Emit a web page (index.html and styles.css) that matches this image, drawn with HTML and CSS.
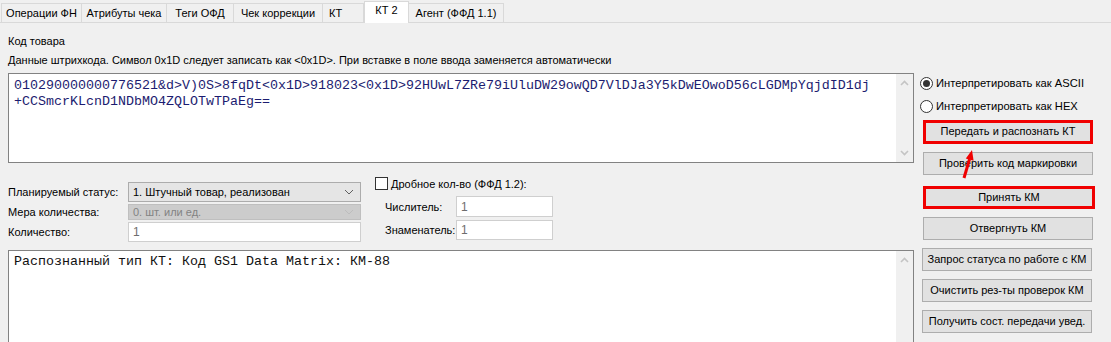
FILE: index.html
```html
<!DOCTYPE html>
<html lang="ru">
<head>
    <meta charset="UTF-8">
    <title>КТ 2</title>
    <link rel="stylesheet" href="styles.css">
</head>
<body>
    <div class="tabs">
        <div class="tab">Операции ФН</div>
        <div class="tab">Атрибуты чека</div>
        <div class="tab">Теги ОФД</div>
        <div class="tab">Чек коррекции</div>
        <div class="tab tab-kt">КТ</div>
        <div class="tab active">КТ 2</div>
        <div class="tab">Агент (ФФД 1.1)</div>
    </div>

    <div class="page">
        <div class="left">
            <div class="caption">Код товара</div>
            <div class="caption caption-2">Данные штрихкода. Символ 0x1D следует записать как &lt;0x1D&gt;. При вставке в поле ввода заменяется автоматически</div>

            <div class="memo memo-code">
                <div class="memo-text">010290000000776521&amp;d&gt;V)0S&gt;8fqDt&lt;0x1D&gt;918023&lt;0x1D&gt;92HUwL7ZRe79iUluDW29owQD7VlDJa3Y5kDwEOwoD56cLGDMpYqjdID1dj
+CCSmcrKLcnD1NDbMO4ZQLOTwTPaEg==</div>
                <div class="vscroll">
                    <svg width="9" height="6" viewBox="0 0 9 6"><polyline points="1,5 4.5,1.5 8,5" fill="none" stroke="#c4c4c4" stroke-width="1.6"/></svg>
                    <svg width="9" height="6" viewBox="0 0 9 6"><polyline points="1,1 4.5,4.5 8,1" fill="none" stroke="#c4c4c4" stroke-width="1.6"/></svg>
                </div>
            </div>

            <div class="mid">
                <div class="fields">
                    <div class="field-label">Планируемый статус:</div>
                    <div class="combo">
                        <span>1. Штучный товар, реализован</span>
                        <svg width="10" height="6" viewBox="0 0 10 6"><polyline points="1,1 5,5 9,1" fill="none" stroke="#606060" stroke-width="1"/></svg>
                    </div>

                    <div class="field-label">Мера количества:</div>
                    <div class="combo disabled">
                        <span>0. шт. или ед.</span>
                        <svg width="10" height="6" viewBox="0 0 10 6"><polyline points="1,1 5,5 9,1" fill="none" stroke="#bdbdbd" stroke-width="1"/></svg>
                    </div>

                    <div class="field-label">Количество:</div>
                    <div class="edit">1</div>
                </div>

                <div class="fraction">
                    <div class="check-row">
                        <span class="checkbox"></span>
                        <span>Дробное кол-во (ФФД 1.2):</span>
                    </div>
                    <div class="frac-grid">
                        <div class="field-label">Числитель:</div>
                        <div class="edit edit-row1">1</div>
                        <div class="field-label">Знаменатель:</div>
                        <div class="edit">1</div>
                    </div>
                </div>
            </div>

            <div class="memo memo-result">
                <div class="memo-text memo-black">Распознанный тип КТ: Код GS1 Data Matrix: КМ-88</div>
                <div class="vscroll">
                    <svg width="9" height="6" viewBox="0 0 9 6"><polyline points="1,5 4.5,1.5 8,5" fill="none" stroke="#c4c4c4" stroke-width="1.6"/></svg>
                </div>
            </div>
        </div>

        <div class="right">
            <div class="radio-row">
                <span class="radio checked"></span>
                <span>Интерпретировать как ASCII</span>
            </div>
            <div class="radio-row">
                <span class="radio"></span>
                <span>Интерпретировать как HEX</span>
            </div>

            <div class="btn hl btn-send">Передать и распознать КТ</div>
            <div class="btn btn-check">Проверить код маркировки</div>
            <div class="btn hl">Принять КМ</div>
            <div class="btn">Отвергнуть КМ</div>
            <div class="btn btn-shift">Запрос статуса по работе с КМ</div>
            <div class="btn btn-shift">Очистить рез-ты проверок КМ</div>
            <div class="btn btn-shift">Получить сост. передачи увед.</div>
        </div>
    </div>

    <!-- стрелка-пометка поверх кнопок -->
    <svg class="arrow" width="24" height="36" viewBox="0 0 24 36">
        <line x1="8" y1="31" x2="13.6" y2="12" stroke="#f00000" stroke-width="3"/>
        <polygon points="16,3 17.6,13.8 9.8,11.4" fill="#f00000"/>
    </svg>
</body>
</html>
```

FILE: styles.css
```css
* {
    margin: 0;
    padding: 0;
    box-sizing: border-box;
}
body {
    width: 1111px;
    height: 342px;
    overflow: hidden;
    background: #f0f0f0;
    font-family: "Liberation Sans", Arial, sans-serif;
    font-size: 11px;
    color: #000;
    position: relative;
}

/* вкладки */
.tabs {
    display: flex;
    height: 23px;
    padding-left: 1px;
    border-bottom: 1px solid #d9d9d9;
    align-items: flex-end;
}
.tab {
    height: 19px;
    line-height: 18px;
    text-align: center;
    border: 1px solid #d9d9d9;
    border-bottom: none;
    border-left: none;
    background: #f0f0f0;
    white-space: nowrap;
}
.tab:first-child {
    border-left: 1px solid #d9d9d9;
}
.tab:nth-child(1) { width: 81px; }
.tab:nth-child(2) { width: 85px; }
.tab:nth-child(3) { width: 67px; }
.tab:nth-child(4) { width: 89px; }
.tab-kt {
    width: 41px;
    text-align: left;
    padding-left: 6px;
}
.tab.active {
    width: 45px;
    height: 22px;
    line-height: 17px;
    background: #fff;
    border-left: 1px solid #d9d9d9;
    margin-bottom: -1px;
    margin-right: -1px;
}
.tab:nth-child(7) {
    width: 96px;
    border-left: 1px solid #d9d9d9;
}

.page {
    display: flex;
    padding: 12px 0 0 8px;
}

.left {
    width: 906px;
}
.caption {
    line-height: 13px;
}
.caption-2 {
    margin-top: 6px;
}

/* многострочные поля */
.memo {
    position: relative;
    display: flex;
    background: #fff;
    border: 1px solid #828282;
    margin-top: 6px;
}
.memo-code {
    height: 90px;
}
.memo-result {
    height: 110px;
    margin-top: 8px;
}
.memo-text {
    flex: 1;
    padding: 4px 0 0 5px;
    font-family: "Liberation Mono", "Courier New", monospace;
    font-size: 13.33px;
    line-height: 16px;
    white-space: pre;
    color: #1c1c70;
}
.memo-black {
    color: #111;
    padding-top: 3px;
}
.vscroll {
    width: 17px;
    background: #f0f0f0;
    display: flex;
    flex-direction: column;
    justify-content: space-between;
    align-items: center;
    padding: 6px 0 6px;
}

/* средняя часть */
.mid {
    display: flex;
    align-items: flex-start;
    height: 79px;
}
.fields {
    display: grid;
    grid-template-columns: 120px 233px;
    grid-template-rows: 20px 16px 20px;
    row-gap: 2px;
    margin-top: 19px;
    align-items: center;
}
.field-label {
    white-space: nowrap;
}
.combo {
    height: 100%;
    display: flex;
    align-items: center;
    justify-content: space-between;
    padding: 0 6px 0 4px;
    background: #e5e5e5;
    border: 1px solid #acacac;
}
.combo.disabled {
    background: #cccccc;
    border-color: #bfbfbf;
    color: #838383;
}
.edit {
    height: 100%;
    display: flex;
    align-items: center;
    padding-left: 4px;
    background: #fff;
    border: 1px solid #cfcfcf;
    color: #6d6d6d;
    font-size: 12px;
}

.fraction {
    margin-left: 14px;
    margin-top: 14px;
}
.check-row {
    display: flex;
    align-items: center;
    gap: 3px;
    height: 13px;
}
.checkbox {
    width: 13px;
    height: 13px;
    border: 1px solid #333;
    background: #fff;
}
.frac-grid {
    display: grid;
    grid-template-columns: 71px 97px;
    grid-template-rows: 21px 20px;
    row-gap: 3px;
    margin: 6px 0 0 10px;
    align-items: center;
}

/* правая колонка */
.right {
    margin-left: 6px;
    padding-top: 37px;
    width: 180px;
}
.radio-row {
    display: flex;
    align-items: center;
    gap: 3px;
    height: 22px;
    margin-bottom: 1px;
    font-size: 11.2px;
}
.radio {
    width: 13px;
    height: 13px;
    border-radius: 50%;
    border: 1px solid #333;
    background: #fff;
    display: flex;
    align-items: center;
    justify-content: center;
}
.radio.checked::after {
    content: "";
    width: 7px;
    height: 7px;
    border-radius: 50%;
    background: #333;
}

.btn {
    width: 170px;
    height: 23px;
    margin-left: 3px;
    line-height: 21px;
    text-align: center;
    background: #e1e1e1;
    border: 1px solid #adadad;
    margin-top: 8px;
    white-space: nowrap;
}
.btn.hl {
    border: 3px solid #f00000;
    line-height: 17px;
}
.btn-send {
    margin-top: 3px;
    height: 24px;
}
.btn-check {
    margin-top: 8px;
}
.btn-check + .btn {
    margin-top: 11px;
    width: 172px;
}
.btn-shift {
    margin-left: 2px;
}

.arrow {
    position: absolute;
    left: 956px;
    top: 147px;
}
```
